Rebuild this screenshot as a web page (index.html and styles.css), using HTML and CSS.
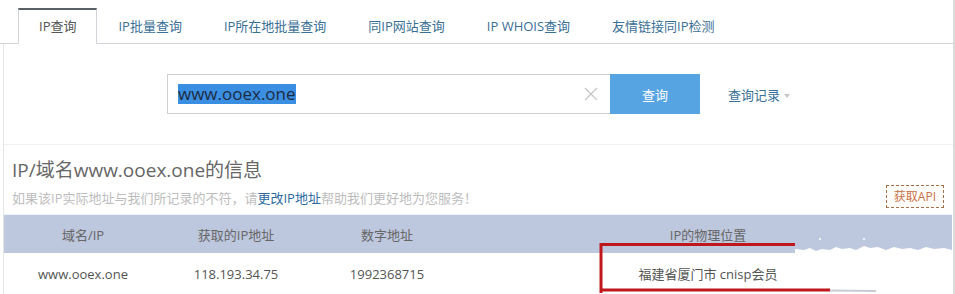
FILE: index.html
```html
<!DOCTYPE html>
<html lang="zh-CN">
<head>
    <meta charset="UTF-8">
    <title>IP查询</title>
    <link rel="stylesheet" href="styles.css">
</head>
<body>
    <div class="page">
        <ul class="tabs">
            <li class="tab active">IP查询</li>
            <li class="tab">IP批量查询</li>
            <li class="tab">IP所在地批量查询</li>
            <li class="tab">同IP网站查询</li>
            <li class="tab">IP WHOIS查询</li>
            <li class="tab">友情链接同IP检测</li>
        </ul>

        <div class="panel">
            <div class="search">
                <div class="search-input">
                    <span class="selected">www.ooex.one</span>
                    <svg class="clear" width="14" height="14" viewBox="0 0 14 14">
                        <path d="M1 1 L13 13 M13 1 L1 13" stroke="#c4c4c4" stroke-width="1.2" fill="none"/>
                    </svg>
                </div>
                <button class="search-btn">查询</button>
                <a class="history">查询记录<span class="caret"></span></a>
            </div>

            <div class="info-head">
                <div>
                    <h2 class="info-title">IP/域名www.ooex.one的信息</h2>
                    <p class="tip">如果该IP实际地址与我们所记录的不符，请<a class="tip-link">更改IP地址</a>帮助我们更好地为您服务！</p>
                </div>
                <a class="api">获取API</a>
            </div>

            <div class="result">
                <table class="result-table">
                    <thead>
                        <tr>
                            <th class="col-domain">域名/IP</th>
                            <th class="col-ip">获取的IP地址</th>
                            <th class="col-num">数字地址</th>
                            <th>IP的物理位置</th>
                        </tr>
                    </thead>
                    <tbody>
                        <tr>
                            <td>www.ooex.one</td>
                            <td>118.193.34.75</td>
                            <td>1992368715</td>
                            <td>福建省厦门市 cnisp会员</td>
                        </tr>
                    </tbody>
                </table>
                <!-- hand drawn annotation over the location cell -->
                <svg class="mark" width="948" height="80" viewBox="0 0 948 80">
                    <path d="M791 34 L800 35 L806 33 L812 36 L818 34 L826 35 L832 32 L838 34 L846 33 L852 35 L860 31 L866 33 L874 32 L882 35 L890 32 L898 34 L906 33 L914 35 L922 32 L930 34 L940 33 L948 35 L948 40 L791 40 Z" fill="#fff"/>
                    <circle cx="816" cy="24" r="1" fill="#fff"/>
                    <circle cx="860" cy="24" r="1" fill="#fff"/>
                    <path d="M596 29.5 L791 29.5" stroke="#c0171c" stroke-width="3"/>
                    <path d="M597 28 L597 78" stroke="#c0171c" stroke-width="3"/>
                    <path d="M596 75 L826 75" stroke="#c0171c" stroke-width="3"/>
                    <path d="M826 75.5 L872 76" stroke="#c8ccd4" stroke-width="2"/>
                </svg>
            </div>
        </div>
    </div>
</body>
</html>
```

FILE: styles.css
```css
body {
    margin: 0;
    background: #fff;
    font-family: "Open Sans", "Noto Sans CJK SC", sans-serif;
    color: #555;
}
.page {
    width: 953px;
    height: 294px;
    overflow: hidden;
    border-right: 2px solid #dcdcdc;
}
.tabs {
    display: flex;
    margin: 0;
    padding: 8px 0 0 18px;
    list-style: none;
    border-bottom: 1px solid #d0d4d8;
}
.tab {
    height: 33px;
    line-height: 33px;
    padding: 0 20px;
    margin-bottom: -1px;
    font-size: 13px;
    color: #3a6f96;
    border: 1px solid transparent;
    border-top-width: 2px;
}
.tab.active {
    color: #555;
    background: #fff;
    border-color: #d0d4d8;
    border-top-color: #5a6166;
    border-bottom-color: #fff;
}
.panel {
    margin-left: 3px;
    border-left: 1px solid #e6e6e6;
}
.search {
    display: flex;
    align-items: center;
    padding: 30px 0 30px 163px;
    border-bottom: 1px solid #efefef;
}
.search-input {
    display: flex;
    align-items: center;
    justify-content: space-between;
    box-sizing: border-box;
    width: 443px;
    height: 40px;
    padding: 0 10px 0 10px;
    border: 1px solid #cfcfcf;
    border-right: none;
}
.selected {
    font-size: 17px;
    line-height: 20px;
    color: #1d2b40;
    background: #3b8fe3;
}
.clear {
    margin-right: 2px;
}
.search-btn {
    width: 90px;
    height: 40px;
    border: none;
    background: #56a4e1;
    color: #fff;
    font-family: inherit;
    font-size: 13px;
    cursor: pointer;
}
.history {
    margin-left: 28px;
    font-size: 13px;
    color: #3a6f96;
}
.caret {
    display: inline-block;
    margin-left: 4px;
    vertical-align: middle;
    border-left: 3px solid transparent;
    border-right: 3px solid transparent;
    border-top: 4px solid #c8c8c8;
}
.info-head {
    display: flex;
    justify-content: space-between;
    align-items: flex-end;
    padding: 12px 9px 6px 8px;
    border-bottom: 1px solid #eef3f8;
}
.info-title {
    margin: 0;
    font-size: 19px;
    font-weight: normal;
    line-height: 26px;
    color: #666;
}
.tip {
    margin: 5px 0 0;
    font-size: 13px;
    line-height: 20px;
    color: #bdbdbd;
}
.tip-link {
    color: #2f6b9e;
}
.api {
    padding: 0 7px;
    height: 21px;
    line-height: 21px;
    font-size: 12px;
    color: #c8714a;
    border: 1px dashed #a8704a;
    background: #fffdf9;
}
.result {
    position: relative;
}
.result-table {
    width: 948px;
    table-layout: fixed;
    border-collapse: collapse;
    font-size: 13px;
    text-align: center;
}
.result-table th {
    height: 38px;
    padding: 0;
    font-weight: normal;
    color: #666;
    background: #bdc7dd;
}
.result-table td {
    height: 41px;
    padding: 0;
    color: #555;
}
.col-domain {
    width: 158px;
}
.col-ip {
    width: 148px;
}
.col-num {
    width: 154px;
}
.mark {
    position: absolute;
    left: 0;
    top: 0;
}
```
